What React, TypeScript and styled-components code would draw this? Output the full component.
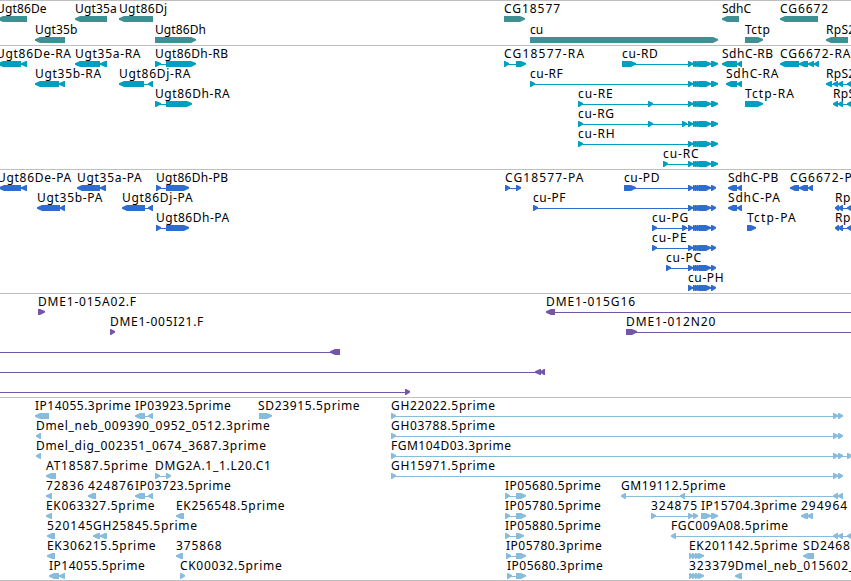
import styled, { createGlobalStyle } from "styled-components";

type Exon = [start: number, end: number];

type Feature = {
    name?: string;
    at?: number;
    tracking?: number;
    dir: "left" | "right";
    exons: Exon[];
    // how far the intron line runs when it leaves the visible window
    from?: number;
    to?: number;
};

type TrackData = {
    id: string;
    color: string;
    laneHeight: number;
    padBottom: number;
    lanes: Feature[][];
};

const VIEW_WIDTH = 851;

const left = (name: string, exons: Exon[], tracking?: number): Feature => ({
    name,
    dir: "left",
    exons,
    tracking,
});

const right = (name: string, exons: Exon[], tracking?: number): Feature => ({
    name,
    dir: "right",
    exons,
    tracking,
});

const CU_RNA: Exon[] = [[688, 693], [693, 697], [695, 699], [697, 702], [699, 711], [711, 718]];
const CU_PROTEIN: Exon[] = [[688, 693], [693, 697], [695, 699], [697, 702], [699, 711], [711, 716]];
const END_PAIR: Exon[] = [[833, 838], [838, 843]];

const TRACKS: TrackData[] = [
    {
        id: "gene",
        color: "#3f8f93",
        laneHeight: 21,
        padBottom: 0,
        lanes: [
            [
                { ...left("Ugt86De", [[-2, 27]], 0.15), at: -4 },
                left("Ugt35a", [[75, 107]], 0.15),
                left("Ugt86Dj", [[119, 153]], 0.35),
                right("CG18577", [[504, 525]], 0.95),
                left("SdhC", [[722, 739]], 0),
                left("CG6672", [[780, 818]], 0.9),
            ],
            [
                left("Ugt35b", [[35, 65]], 0.15),
                right("Ugt86Dh", [[155, 196]], 0.1),
                right("cu", [[530, 718]], 0),
                right("Tctp", [[745, 763]]),
                left("RpS2", [[826, 848]], 0.3),
            ],
        ],
    },
    {
        id: "transcript",
        color: "#009fc0",
        laneHeight: 20,
        padBottom: 1,
        lanes: [
            [
                { ...left("Ugt86De-RA", [[-2, 21], [21, 27]], 0.7), at: -4 },
                left("Ugt35a-RA", [[75, 100], [100, 107]], 0.7),
                right("Ugt86Dh-RB", [[155, 161], [166, 196]], 0.4),
                right("CG18577-RA", [[504, 509], [516, 526]], 1.2),
                right("cu-RD", [[622, 636], ...CU_RNA], 0.65),
                left("SdhC-RB", [[722, 737], [737, 742]]),
                left("CG6672-RA", [[780, 799], [799, 808], [808, 814], [814, 819]], 1),
            ],
            [
                left("Ugt35b-RA", [[35, 59], [59, 65]], 0.7),
                left("Ugt86Dj-RA", [[119, 144], [148, 153]], 0.7),
                right("cu-RF", [[530, 535], ...CU_RNA], 0.5),
                left("SdhC-RA", [[726, 737], [737, 742]], 0.75),
                left("RpS2", [[826, 832], [833, 838], [838, 843], [847, 852]], 0.3),
            ],
            [
                right("Ugt86Dh-RA", [[155, 161], [166, 192]], 0.6),
                right("cu-RE", [[578, 583], [648, 653], ...CU_RNA], 0.9),
                right("Tctp-RA", [[745, 763]], 1.1),
                left("RpS", [[833, 838], [838, 843], [847, 852]], 0.3),
            ],
            [right("cu-RG", [[578, 583], [648, 653], [682, 687], ...CU_RNA], 0.7)],
            [right("cu-RH", [[578, 583], ...CU_RNA], 0.8)],
            [right("cu-RC", [[663, 668], ...CU_RNA], 0.9)],
        ],
    },
    {
        id: "protein",
        color: "#2f6ccf",
        laneHeight: 20,
        padBottom: 1,
        lanes: [
            [
                { ...left("Ugt86De-PA", [[-1, 21], [21, 27]], 0.7), at: -3 },
                left("Ugt35a-PA", [[77, 100], [100, 106]], 0.7),
                right("Ugt86Dh-PB", [[156, 161], [166, 189]], 0.3),
                right("CG18577-PA", [[505, 510], [516, 521]], 1.1),
                right("cu-PD", [[624, 636], ...CU_PROTEIN], 0.6),
                left("SdhC-PB", [[728, 737], [737, 742]], 0.4),
                left("CG6672-P", [[790, 799], [799, 808], [808, 813]], 1),
            ],
            [
                left("Ugt35b-PA", [[37, 60], [60, 65]], 0.7),
                left("Ugt86Dj-PA", [[122, 145], [148, 153]], 0.7),
                right("cu-PF", [[533, 538], ...CU_PROTEIN], 0.5),
                left("SdhC-PA", [[728, 737], [737, 742]], 0.8),
                left("Rp", [[835, 839], [838, 843], [847, 852]]),
            ],
            [
                right("Ugt86Dh-PA", [[156, 161], [166, 189]], 0.5),
                right("cu-PG", [[652, 657], [682, 687], ...CU_PROTEIN], 0.8),
                right("Tctp-PA", [[747, 756]], 1.2),
                left("Rp", [[835, 839], [838, 843], [847, 852]]),
            ],
            [right("cu-PE", [[652, 657], ...CU_PROTEIN], 0.9)],
            [right("cu-PC", [[666, 671], ...CU_PROTEIN], 0.8)],
            [right("cu-PH", CU_PROTEIN, 0.6)],
        ],
    },
    {
        id: "bac",
        color: "#7356a8",
        laneHeight: 20,
        padBottom: 1,
        lanes: [
            [
                right("DME1-015A02.F", [[38, 45]], 0.8),
                { ...left("DME1-015G16", [[546, 555]], 0.9), to: VIEW_WIDTH },
            ],
            [
                right("DME1-005I21.F", [[110, 115]], 0.7),
                { ...right("DME1-012N20", [[626, 637]], 0.9), to: VIEW_WIDTH },
            ],
            [{ dir: "left", exons: [[330, 340]], from: 0 }],
            [{ dir: "left", exons: [[535, 541], [540, 545]], from: 0 }],
            [{ dir: "right", exons: [[405, 410]], from: 0 }],
        ],
    },
    {
        id: "est",
        color: "#87bcdd",
        laneHeight: 20,
        padBottom: 0,
        lanes: [
            [
                left("IP14055.3prime", [[35, 49]]),
                left("IP03923.5prime", [[135, 145], [148, 153]]),
                { ...right("SD23915.5prime", [[259, 272]], 0.65), at: 258 },
                right("GH22022.5prime", [[391, 396], ...END_PAIR], 0.65),
            ],
            [
                left("Dmel_neb_009390_0952_0512.3prime", [[36, 41]], 0.69),
                right("GH03788.5prime", [[391, 396], ...END_PAIR], 0.65),
            ],
            [
                left("Dmel_dig_002351_0674_3687.3prime", [[36, 41]], 0.69),
                right("FGM104D03.3prime", [[391, 396], ...END_PAIR, [847, 852]]),
            ],
            [
                left("AT18587.5prime", [[46, 56]], 0.8),
                right("DMG2A.1_1.L20.C1", [[155, 160], [166, 171]], 0.7),
                right("GH15971.5prime", [[391, 396], ...END_PAIR], 0.65),
            ],
            [
                left("72836", [[46, 52]], 0.9),
                left("424876", [[88, 96]], 0.9),
                left("IP03723.5prime", [[135, 145], [148, 153]]),
                right("IP05680.5prime", [[505, 510], [516, 526]]),
                left("GM19112.5prime", [[621, 626], [680, 685], ...END_PAIR], 0.55),
            ],
            [
                left("EK063327.5prime", [[46, 52]], 0.7),
                left("EK256548.5prime", [[176, 184]], 0.7),
                right("IP05780.5prime", [[505, 510], [516, 526]]),
                right("324875", [[651, 656], [688, 693], [693, 698]], 1),
                right("IP15704.3prime", [[701, 711], [711, 718]]),
                left("294964", [[801, 808], [807, 813]], 1),
            ],
            [
                left("520145", [[47, 55]], 0.9),
                left("GH25845.5prime", [[93, 100], [100, 107]], 0.65),
                right("IP05880.5prime", [[505, 510], [516, 524]]),
                left("FGC009A08.5prime", [[671, 676], ...END_PAIR, [847, 852]], 0.6),
            ],
            [
                left("EK306215.5prime", [[47, 55]], 0.7),
                left("375868", [[176, 183]], 0.9),
                right("IP05780.3prime", [[506, 511], [516, 526]]),
                right("EK201142.5prime", [[689, 693], [692, 696], [695, 700], [698, 704]], 0.7),
                left("SD2468", [[803, 814]], 0.8),
            ],
            [
                left("IP14055.5prime", [[49, 59], [59, 65]]),
                right("CK00032.5prime", [[180, 185]], 0.68),
                right("IP05680.3prime", [[507, 512], [516, 526]]),
                right("323379", [[689, 693], [692, 696], [695, 700], [698, 704]], 0.9),
                left("Dmel_neb_015602_", [[735, 742]], 0.7),
            ],
        ],
    },
];

const HEAD = 5;

// the arrow head keeps a blunt tip so that short exons stay readable
const exonPoints = ([start, end]: Exon, dir: Feature["dir"]) => {
    const head = Math.min(HEAD, end - start - 1);
    return dir === "right"
        ? `${start},0 ${end - head},0 ${end},2 ${end},3.6 ${end - head},6 ${start},6`
        : `${end},0 ${start + head},0 ${start},2.2 ${start},3.8 ${start + head},6 ${end},6`;
};

const Glyph = ({ feature }: { feature: Feature }) => {
    const { exons, dir, from, to } = feature;
    const lineStart = from ?? exons[0][0] + 2;
    const lineEnd = to ?? exons[exons.length - 1][1] - 2;

    return (
        <g>
            <rect x={lineStart} y={3} width={lineEnd - lineStart} height={1} />
            {exons.map((exon) => (
                <polygon key={exon[0]} points={exonPoints(exon, dir)} />
            ))}
        </g>
    );
};

const App = () => {
    return (
        <>
            <GlobalStyle />
            <Browser>
                {TRACKS.map((track) => (
                    <Track key={track.id} $padBottom={track.padBottom}>
                        {track.lanes.map((features, index) => (
                            <Lane key={index} $height={track.laneHeight}>
                                {features.map((feature, i) =>
                                    feature.name ? (
                                        <Label
                                            key={i}
                                            $x={feature.at ?? feature.exons[0][0]}
                                            $tracking={feature.tracking ?? 0.5}
                                        >
                                            {feature.name}
                                        </Label>
                                    ) : null,
                                )}
                                <Glyphs width={VIEW_WIDTH} height={7} $color={track.color} aria-hidden>
                                    {features.map((feature, i) => (
                                        <Glyph key={i} feature={feature} />
                                    ))}
                                </Glyphs>
                            </Lane>
                        ))}
                    </Track>
                ))}
            </Browser>
        </>
    );
};

export default App;

const GlobalStyle = createGlobalStyle`
    body {
        margin: 0;
        background: #ffffff;
        overflow: hidden;
    }
`;

const Browser = styled.main`
    width: 851px;
    height: 581px;
    display: flex;
    flex-direction: column;
    box-sizing: border-box;
    border-bottom: 1px solid #bfbfbf;
    background: #ffffff;
    overflow: hidden;
`;

const Track = styled.section<{ $padBottom: number }>`
    display: flex;
    flex-direction: column;
    flex-shrink: 0;
    padding: 2px 0 ${({ $padBottom }) => $padBottom}px;
    border-top: 1px solid #bfbfbf;
`;

const Lane = styled.div<{ $height: number }>`
    position: relative;
    height: ${({ $height }) => $height}px;
    padding-top: 13px;
    box-sizing: border-box;
`;

const Label = styled.span<{ $x: number; $tracking: number }>`
    position: absolute;
    top: -2px;
    left: ${({ $x }) => $x}px;
    color: #000000;
    font-family: "Noto Sans", "Open Sans", sans-serif;
    font-size: 12px;
    line-height: 16px;
    letter-spacing: ${({ $tracking }) => $tracking}px;
    white-space: nowrap;
`;

const Glyphs = styled.svg<{ $color: string }>`
    display: block;
    fill: ${({ $color }) => $color};
`;
